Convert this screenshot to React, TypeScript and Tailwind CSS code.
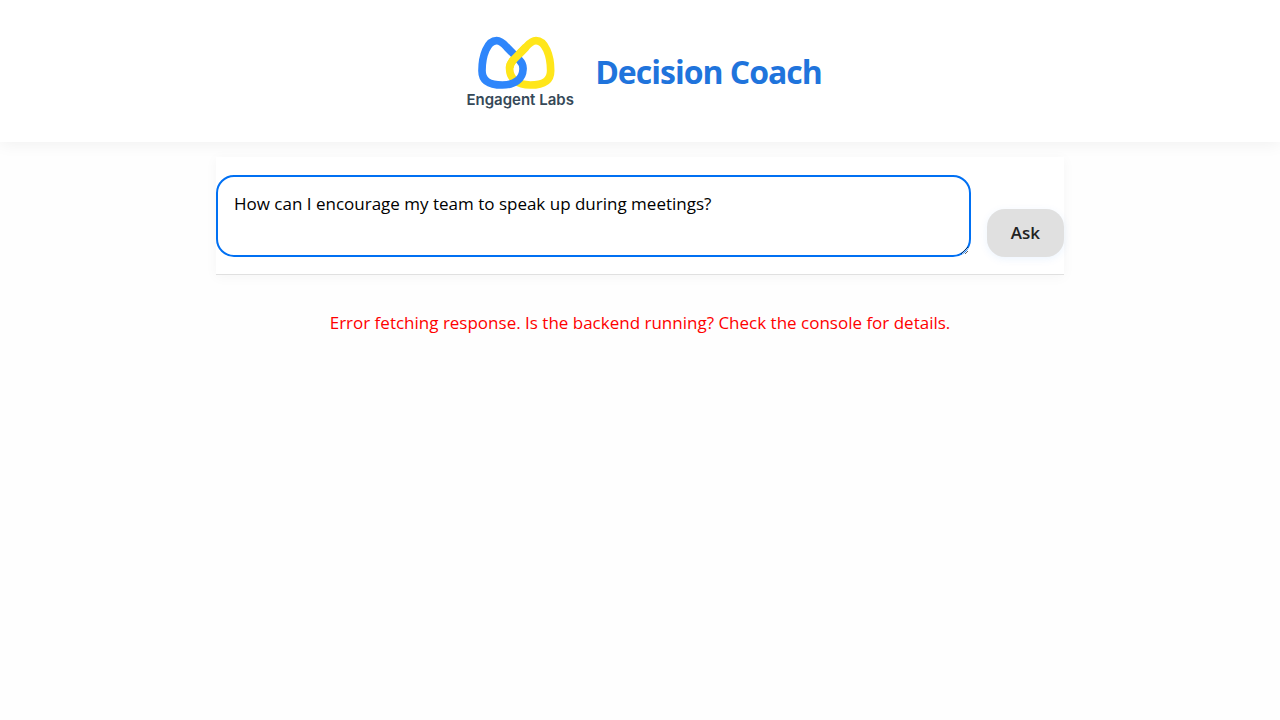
import { useState } from "react";

function Logo() {
  return (
    <div className="flex w-[110px] flex-col items-center">
      <svg viewBox="66 28 246 168" className="mr-1.5 h-14 w-[82px]" fill="none" strokeWidth="23" strokeLinecap="butt" aria-hidden="true">
        <path
          stroke="#ffe61a"
          d="M290 135C290 90 274 45 246 45C234 45 226 53 216 64L178 103C168 113 166 122 167 132C168 158 189 178 229 178C269 178 290 165 290 135Z"
        />
        <path
          stroke="#2f86fb"
          d="M84 135C84 90 100 45 128 45C140 45 148 53 158 64L196 103C206 113 208 122 207 132C206 158 185 178 145 178C105 178 84 165 84 135Z"
        />
        <path stroke="#ffe61a" d="M216 64L178 103C170 111 167 119 167 128" />
      </svg>
      <span className="font-['Inter','Liberation_Sans',sans-serif] text-[15px] leading-[18px] font-semibold whitespace-nowrap text-[#364958]">
        Engagent Labs
      </span>
    </div>
  );
}

export default function App() {
  const [question, setQuestion] = useState("How can I encourage my team to speak up during meetings?");

  return (
    <div className="min-h-screen bg-[#fefefe] font-['Open_Sans','Noto_Sans',sans-serif]">
      <header className="flex items-center justify-center gap-5 bg-white pt-[35px] pb-[33px] pl-[7px] shadow-[0_2px_16px_rgba(0,0,0,0.06)]">
        <Logo />
        <h1 className="text-[32px] leading-10 font-bold tracking-[-1px] text-[#1f74dc]">Decision Coach</h1>
      </header>
      <main className="mx-auto mt-[15px] max-w-[848px]">
        <form
          className="flex items-end gap-4 border-b border-[#e0e0e0] bg-white pt-[18px] pb-[17px] shadow-[0_2px_12px_rgba(0,0,0,0.04)]"
          onSubmit={(event) => event.preventDefault()}
        >
          <textarea
            aria-label="Your question"
            className="block h-[82px] min-w-0 flex-1 resize-y rounded-[18px] border-2 border-[#0070f3] bg-white px-4 py-[13px] text-[17px] leading-7 text-black outline-none"
            value={question}
            onChange={(event) => setQuestion(event.target.value)}
          />
          <button
            type="submit"
            className="h-12 rounded-[18px] bg-[#e0e0e0] px-6 text-[17px] font-semibold text-[#222] shadow-[0_2px_8px_rgba(0,112,243,0.08)]"
          >
            Ask
          </button>
        </form>
        <p role="alert" className="mt-8 text-center text-[17px] leading-8 text-[#ff0000]">
          Error fetching response. Is the backend running? Check the console for details.
        </p>
      </main>
    </div>
  );
}
